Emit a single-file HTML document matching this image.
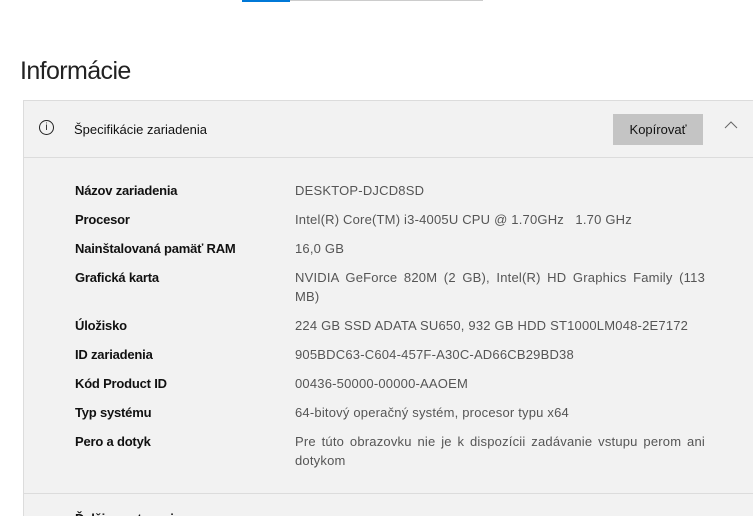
<!DOCTYPE html>
<html><head><meta charset="utf-8"><style>
html,body{margin:0;width:753px;height:516px;overflow:hidden;background:#fff;font-family:"Liberation Sans",sans-serif;position:relative}
.a{position:absolute}
.lab{position:absolute;left:75px;font-size:13px;font-weight:bold;color:#111;letter-spacing:-0.2px}
.val{position:absolute;left:295px;width:410px;font-size:13px;color:#555;line-height:19px;text-align:justify;letter-spacing:0.2px}
</style></head><body>
<div class="a" style="left:242px;top:0;width:48px;height:2px;background:#0078d7"></div>
<div class="a" style="left:290px;top:0;width:193px;height:1px;background:#ccc"></div>
<div class="a" style="left:20px;top:57px;font-size:25px;color:#222;letter-spacing:-0.6px">Informácie</div>
<div class="a" style="left:23px;top:100px;width:740px;height:416px;background:#f2f2f2;border:1px solid #dcdcdc;border-bottom:none;box-sizing:border-box"></div>
<div class="a" style="left:24px;top:157px;width:729px;height:1px;background:#dcdcdc"></div>
<div class="a" style="left:24px;top:493px;width:729px;height:1px;background:#dcdcdc"></div>
<div class="a" style="left:39px;top:120px;width:15px;height:15px;border:1px solid #222;border-radius:50%;box-sizing:border-box;font-size:10px;text-align:center;line-height:13px;color:#222">i</div>
<div class="a" style="left:74px;top:122px;font-size:13px;color:#111">Špecifikácie zariadenia</div>
<div class="a" style="left:613px;top:114px;width:90px;height:31px;background:#c4c4c4;font-size:13px;color:#111;text-align:center;line-height:31px">Kopírovať</div>
<svg class="a" style="left:724px;top:121px" width="14" height="9"><path d="M1 7 L7 1 L13 7" fill="none" stroke="#666" stroke-width="1"/></svg>
<div class="lab" style="top:183px">Názov zariadenia</div><div class="val" style="top:181px">DESKTOP-DJCD8SD</div>
<div class="lab" style="top:212px">Procesor</div><div class="val" style="top:210px">Intel(R) Core(TM) i3-4005U CPU @ 1.70GHz &nbsp; 1.70 GHz</div>
<div class="lab" style="top:241px">Nainštalovaná pamäť RAM</div><div class="val" style="top:239px">16,0 GB</div>
<div class="lab" style="top:270px">Grafická karta</div><div class="val" style="top:268px">NVIDIA GeForce 820M (2 GB), Intel(R) HD Graphics Family (113 MB)</div>
<div class="lab" style="top:318px">Úložisko</div><div class="val" style="top:316px">224 GB SSD ADATA SU650, 932 GB HDD ST1000LM048-2E7172</div>
<div class="lab" style="top:347px">ID zariadenia</div><div class="val" style="top:345px">905BDC63-C604-457F-A30C-AD66CB29BD38</div>
<div class="lab" style="top:376px">Kód Product ID</div><div class="val" style="top:374px">00436-50000-00000-AAOEM</div>
<div class="lab" style="top:405px">Typ systému</div><div class="val" style="top:403px">64-bitový operačný systém, procesor typu x64</div>
<div class="lab" style="top:434px">Pero a dotyk</div><div class="val" style="top:432px">Pre túto obrazovku nie je k dispozícii zadávanie vstupu perom ani dotykom</div>
<div class="lab" style="top:511px">Ďalšie nastavenia</div>
</body></html>
